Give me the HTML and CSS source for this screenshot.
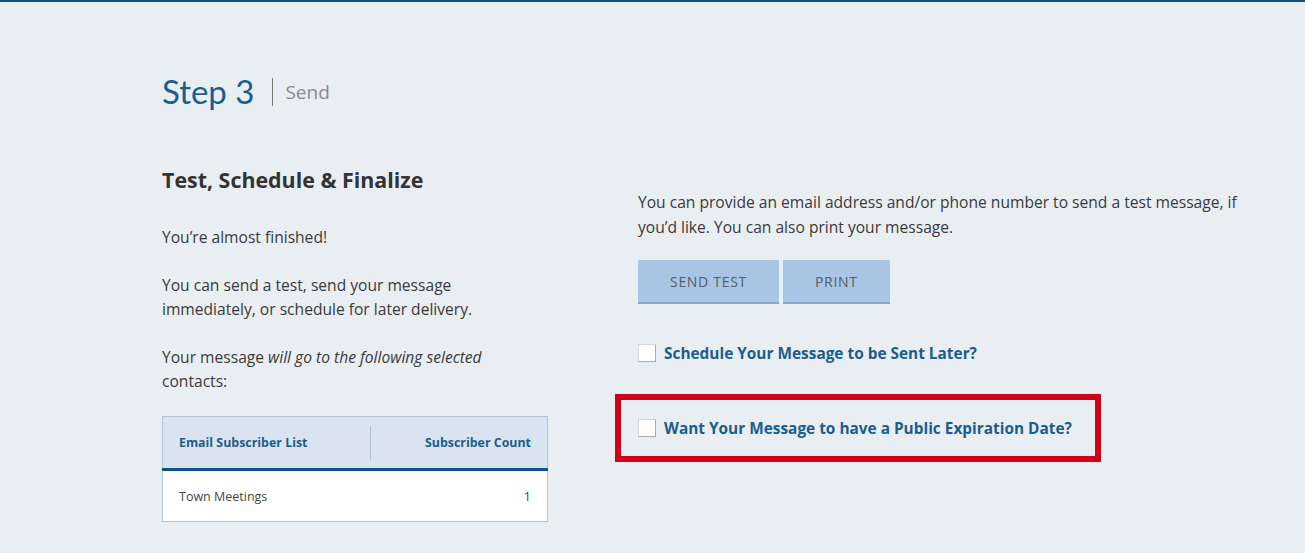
FILE: index.html
```html
<!DOCTYPE html>
<html lang="en">
<head>
<meta charset="utf-8">
<title>Step 3 - Send</title>
<link rel="stylesheet" href="styles.css">
</head>
<body>
<div class="page">
  <div class="step">
    <h1 class="step-title">Step 3</h1>
    <span class="step-sep"></span>
    <span class="step-sub">Send</span>
  </div>
  <div class="cols">
    <div class="left">
      <h2 class="section-title">Test, Schedule &amp; Finalize</h2>
      <p class="txt">You’re almost finished!</p>
      <p class="txt">You can send a test, send your message immediately, or schedule for later delivery.</p>
      <p class="txt last">Your message <em>will go to the following selected</em> contacts:</p>
      <table class="subs">
        <thead>
          <tr><th class="c1">Email Subscriber List</th><th class="c2">Subscriber Count</th></tr>
        </thead>
        <tbody>
          <tr><td class="c1">Town Meetings</td><td class="c2">1</td></tr>
        </tbody>
      </table>
    </div>
    <div class="right">
      <p class="txt wide">You can provide an email address and/or phone number to send a test message, if you’d like. You can also print your message.</p>
      <div class="buttons">
        <button class="btn">SEND TEST</button>
        <button class="btn">PRINT</button>
      </div>
      <label class="check"><span class="box"></span><span class="check-label">Schedule Your Message to be Sent Later?</span></label>
      <div class="highlight">
        <label class="check"><span class="box"></span><span class="check-label">Want Your Message to have a Public Expiration Date?</span></label>
      </div>
    </div>
  </div>
</div>
</body>
</html>
```

FILE: styles.css
```css
html, body {
  margin: 0;
  padding: 0;
}
body {
  background: #e9eef3;
  border-top: 2px solid #0b5387;
  font-family: "Open Sans", "Noto Sans", sans-serif;
  color: #3a3a3a;
  height: 551px;
  overflow: hidden;
}
.page {
  padding: 69px 0 0 162px;
}
.step {
  display: flex;
  align-items: center;
  height: 40px;
}
.step-title {
  margin: 0;
  font-family: Lato, "Open Sans", sans-serif;
  font-weight: 400;
  font-size: 33px;
  line-height: 40px;
  color: #1b5d8e;
}
.step-sep {
  width: 1px;
  height: 28px;
  background: #777;
  margin: 2px 12px 0 18px;
}
.step-sub {
  font-size: 19px;
  color: #8a8a8a;
  padding-top: 2px;
}
.cols {
  display: grid;
  grid-template-columns: 386px 1fr;
  column-gap: 90px;
  align-items: start;
  margin-top: 54px;
}
.section-title {
  margin: 0 0 30px;
  font-size: 21.4px;
  line-height: 30px;
  font-weight: 700;
  color: #333;
}
.txt {
  margin: 0 0 24px;
  font-size: 15.6px;
  line-height: 24px;
}
.left .txt {
  max-width: 370px;
}
.left .txt.last {
  margin-bottom: 23px;
}
.txt em {
  font-style: italic;
}
.subs {
  width: 386px;
  border-collapse: collapse;
  border: 1px solid #b3c3d6;
  background: #fff;
  font-size: 12.5px;
}
.subs th {
  background: #dae4f0;
  color: #1b5d8e;
  font-weight: 700;
  font-size: 12.4px;
  height: 51px;
  padding: 0 16px;
  border-bottom: 3px solid #0b5387;
  position: relative;
}
.subs th.c1 { text-align: left; width: 175px; }
.subs th.c2 { text-align: right; }
.subs th.c2::before {
  content: "";
  position: absolute;
  left: 0;
  top: 9px;
  bottom: 8px;
  width: 1px;
  background: #b3c3d6;
}
.subs td {
  height: 50px;
  padding: 0 16px;
  color: #444;
}
.subs td.c1 { text-align: left; }
.subs td.c2 { text-align: right; }
.right {
  padding-top: 25px;
}
.txt.wide {
  line-height: 25px;
  margin-bottom: 20px;
  max-width: 615px;
}
.buttons {
  display: flex;
  gap: 4px;
  margin-bottom: 39px;
}
.btn {
  font-family: inherit;
  font-size: 14px;
  letter-spacing: 0.7px;
  color: #555d68;
  background: #a8c6e4;
  border: 0;
  border-bottom: 2px solid #8aa6c8;
  height: 44px;
  padding: 0 32px;
}
.check {
  display: flex;
  align-items: center;
  gap: 8px;
  height: 20px;
}
.box {
  width: 16px;
  height: 16px;
  background: #fff;
  border: 1px solid #d4d8dc;
  border-right-color: #aaa;
  border-bottom-color: #aaa;
}
.check-label {
  font-size: 15.4px;
  font-weight: 700;
  color: #1b5d8e;
}
.highlight {
  display: inline-block;
  margin: 31px 0 0 -23px;
  border: 6px solid #d0021b;
  padding: 18px 23px 18px 17px;
}
```
